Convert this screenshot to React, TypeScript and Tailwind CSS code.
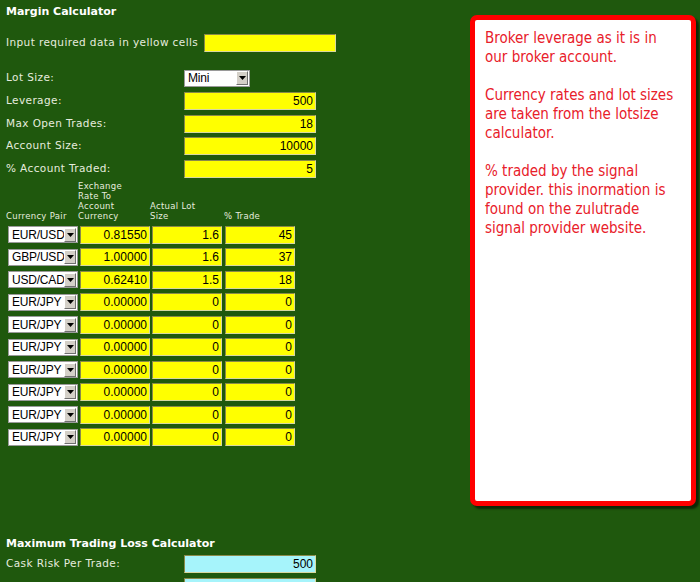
const rows = [
  { pair: "EUR/USD", rate: "0.81550", lot: "1.6", trade: "45" },
  { pair: "GBP/USD", rate: "1.00000", lot: "1.6", trade: "37" },
  { pair: "USD/CAD", rate: "0.62410", lot: "1.5", trade: "18" },
  { pair: "EUR/JPY", rate: "0.00000", lot: "0", trade: "0" },
  { pair: "EUR/JPY", rate: "0.00000", lot: "0", trade: "0" },
  { pair: "EUR/JPY", rate: "0.00000", lot: "0", trade: "0" },
  { pair: "EUR/JPY", rate: "0.00000", lot: "0", trade: "0" },
  { pair: "EUR/JPY", rate: "0.00000", lot: "0", trade: "0" },
  { pair: "EUR/JPY", rate: "0.00000", lot: "0", trade: "0" },
  { pair: "EUR/JPY", rate: "0.00000", lot: "0", trade: "0" },
];

const label = "text-[10.5px] tracking-[0.4px] text-[#e6ecdf] [font-family:'DejaVu_Sans',Verdana,sans-serif]";
const num = "[font-family:'Liberation_Sans',Arial,sans-serif] text-[12px] text-black";

function Cell({ value, w = "w-[132px]", cyan = false }: { value: string; w?: string; cyan?: boolean }) {
  return (
    <div
      className={`${w} h-[18px] flex items-center justify-end pr-[2px] border border-t-[#8a8a4a] border-l-[#8a8a4a] border-b-[#d8d8a0] border-r-[#d8d8a0] ${
        cyan ? "bg-[#a6f4fb]" : "bg-[#ffff00]"
      } ${num} ${cyan ? "text-[#6a7a7a]" : ""}`}
    >
      {value}
    </div>
  );
}

function Select({ value, w }: { value: string; w: string }) {
  return (
    <div className={`${w} h-[17px] flex items-center bg-white border border-[#9a9a9a]`}>
      <span className={`flex-1 pl-[3px] ${num} text-[11px] tracking-[-0.2px] leading-none whitespace-nowrap overflow-hidden`}>
        {value}
      </span>
      <div className="w-[12px] h-[14px] mr-[1px] shrink-0 bg-[#d4d0c8] border border-t-white border-l-white border-b-[#707070] border-r-[#707070] flex items-center justify-center">
        <svg width="7" height="4" viewBox="0 0 7 4">
          <path d="M0 0h7L3.5 4z" fill="#000" />
        </svg>
      </div>
    </div>
  );
}

function Row({ name, children }: { name: string; children: React.ReactNode }) {
  return (
    <div className="flex items-center h-[18px]">
      <span className={`w-[178px] ${label}`}>{name}</span>
      {children}
    </div>
  );
}

export default function App() {
  return (
    <div className="w-[700px] h-[582px] overflow-hidden bg-[#1f580d] flex">
      <div className="w-[464px] shrink-0 pl-[6px] pt-[4px] flex flex-col">
        <div className="h-[16px] flex items-center text-[11px] font-bold text-white [font-family:'DejaVu_Sans',Verdana,sans-serif]">
          Margin Calculator
        </div>
        <div className="mt-[14px] flex items-center h-[18px]">
          <span className={label}>Input required data in yellow cells</span>
          <div className="ml-[6px] w-[132px] h-[18px] bg-[#ffff00] border border-t-[#8a8a4a] border-l-[#8a8a4a] border-b-[#d8d8a0] border-r-[#d8d8a0]" />
        </div>
        <div className="mt-[18px] flex items-center h-[16px]">
          <span className={`w-[178px] ${label}`}>Lot Size:</span>
          <Select value="Mini" w="w-[66px]" />
        </div>
        <div className="mt-[6px] flex flex-col gap-[4.5px]">
          <Row name="Leverage:">
            <Cell value="500" />
          </Row>
          <Row name="Max Open Trades:">
            <Cell value="18" />
          </Row>
          <Row name="Account Size:">
            <Cell value="10000" />
          </Row>
          <Row name="% Account Traded:">
            <Cell value="5" />
          </Row>
        </div>
        <div className="mt-[3px] h-[44px] flex items-end text-[8.5px] leading-[10px] tracking-[0.3px] text-[#e6ecdf] [font-family:'DejaVu_Sans',Verdana,sans-serif]">
          <div className="w-[72px]">Currency Pair</div>
          <div className="w-[72px]">
            Exchange
            <br />
            Rate To
            <br />
            Account
            <br />
            Currency
          </div>
          <div className="w-[74px]">
            Actual Lot
            <br />
            Size
          </div>
          <div className="w-[72px]">% Trade</div>
        </div>
        <div className="mt-[5px] ml-[2px] flex flex-col gap-[4.5px]">
          {rows.map((r, i) => (
            <div key={i} className="flex items-center h-[18px]">
              <Select value={r.pair} w="w-[70px]" />
              <div className="ml-[2px]">
                <Cell value={r.rate} w="w-[70px]" />
              </div>
              <div className="ml-[2px]">
                <Cell value={r.lot} w="w-[70px]" />
              </div>
              <div className="ml-[3px]">
                <Cell value={r.trade} w="w-[70px]" />
              </div>
            </div>
          ))}
        </div>
        <div className="mt-[90px] h-[16px] flex items-center text-[11px] font-bold text-white [font-family:'DejaVu_Sans',Verdana,sans-serif]">
          Maximum Trading Loss Calculator
        </div>
        <div className="mt-[3px] flex flex-col gap-[4.5px]">
          <Row name="Cask Risk Per Trade:">
            <Cell value="500" cyan />
          </Row>
          <Row name="Maximum Loss Allowed:">
            <Cell value="10" cyan />
          </Row>
        </div>
      </div>
      <div className="ml-[6px] mt-[15px] w-[226px] h-[491px] shrink-0 rounded-[7px] border-[5px] border-[#ff0000] bg-white shadow-[3px_3px_2px_rgba(0,0,0,0.55)] pl-[10px] pr-[14px] pt-[9px] text-[15px] leading-[19px] text-[#e8202a] [font-family:'DejaVu_Sans_Condensed','Liberation_Sans',sans-serif]">
        <p>Broker leverage as it is in our broker account.</p>
        <p className="mt-[19px]">Currency rates and lot sizes are taken from the lotsize calculator.</p>
        <p className="mt-[19px]">% traded by the signal provider. this inormation is found on the zulutrade signal provider website.</p>
      </div>
    </div>
  );
}
